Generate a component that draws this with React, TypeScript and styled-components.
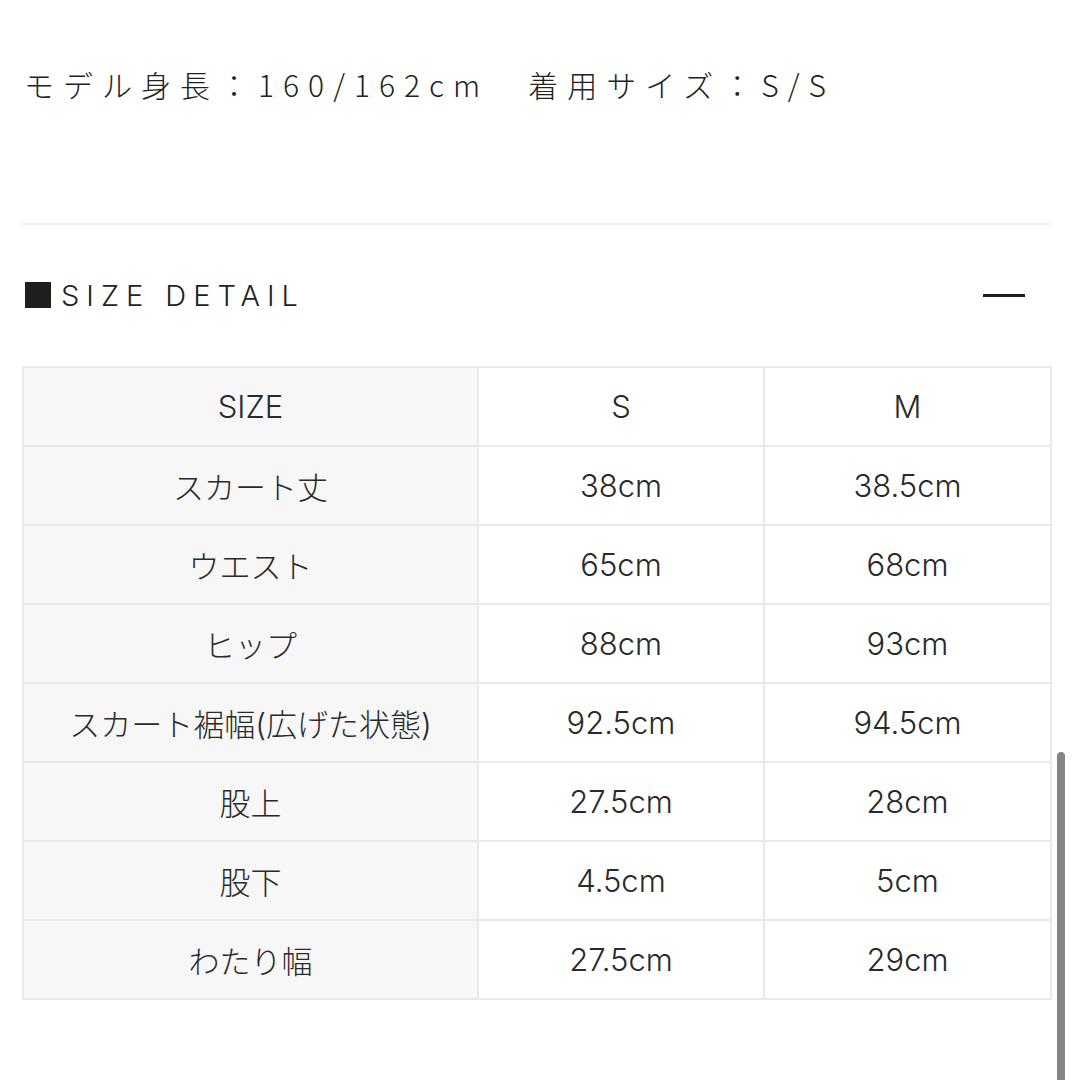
import React from 'react';
import styled, {createGlobalStyle} from "styled-components";

const GlobalStyle = createGlobalStyle`
  html, body {
    margin: 0;
    padding: 0;
    background: #fff;
  }
  body {
    font-family: "Inter", "Noto Sans CJK JP", sans-serif;
    color: #222;
  }
`

interface SizeRow {
    label: string;
    s: string;
    m: string;
}

const rows: Array<SizeRow> = [
    {label: 'スカート丈', s: '38cm', m: '38.5cm'},
    {label: 'ウエスト', s: '65cm', m: '68cm'},
    {label: 'ヒップ', s: '88cm', m: '93cm'},
    {label: 'スカート裾幅(広げた状態)', s: '92.5cm', m: '94.5cm'},
    {label: '股上', s: '27.5cm', m: '28cm'},
    {label: '股下', s: '4.5cm', m: '5cm'},
    {label: 'わたり幅', s: '27.5cm', m: '29cm'},
];

export default function App() {
    return (
        <>
            <GlobalStyle/>
            <Page>
                <ModelInfo>モデル身長：160/162cm　着用サイズ：S/S</ModelInfo>
                <Divider/>
                <SectionHeader>
                    <SectionTitle>
                        <Square/>
                        SIZE DETAIL
                    </SectionTitle>
                    <Minus/>
                </SectionHeader>
                <SizeTable>
                    <colgroup>
                        <col style={{width: '455px'}}/>
                        <col style={{width: '286px'}}/>
                        <col style={{width: '287px'}}/>
                    </colgroup>
                    <tbody>
                    <tr>
                        <Cell head>SIZE</Cell>
                        <Cell>S</Cell>
                        <Cell>M</Cell>
                    </tr>
                    {rows.map((row) => (
                        <tr key={row.label}>
                            <Cell head>{row.label}</Cell>
                            <Cell>{row.s}</Cell>
                            <Cell>{row.m}</Cell>
                        </tr>
                    ))}
                    </tbody>
                </SizeTable>
            </Page>
            <ScrollThumb/>
        </>
    );
}

const Page = styled.div`
  padding: 64px 24px 80px 22px;
`

const ModelInfo = styled.p`
  margin: 0 0 0 2px;
  font-family: "Noto Sans CJK JP", sans-serif;
  font-size: 30px;
  line-height: 40px;
  letter-spacing: 9px;
  color: #222;
  font-weight: 300;
`

const Divider = styled.hr`
  margin: 119px 0 0;
  border: none;
  height: 2px;
  background: #efefef;
`

const SectionHeader = styled.div`
  display: flex;
  align-items: center;
  justify-content: space-between;
  height: 40px;
  margin-top: 50px;
`

const SectionTitle = styled.h2`
  display: flex;
  align-items: center;
  margin: 0 0 0 3px;
  font-family: "Inter", "Noto Sans", sans-serif;
  font-weight: 300;
  font-size: 29px;
  letter-spacing: 7px;
  color: #222;
`

const Square = styled.span`
  display: inline-block;
  width: 26px;
  height: 26px;
  background: #1e1e1e;
  margin-right: 10px;
`

const Minus = styled.span`
  display: block;
  width: 42px;
  height: 3px;
  background: #1e1e1e;
  margin-right: 25px;
`

const SizeTable = styled.table`
  margin-top: 51px;
  width: 1028px;
  border-collapse: collapse;
  table-layout: fixed;
  border: 2px solid #e9e9e9;
`

const Cell = styled.td<{ head?: boolean }>`
  height: 77px;
  padding: 0;
  text-align: center;
  border: 2px solid #e9e9e9;
  background: ${props => props.head ? '#f7f7f7' : '#fff'};
  font-family: "Inter", "Noto Sans CJK JP", sans-serif;
  font-size: 31px;
  font-weight: 300;
  color: #2a2a2a;
`

const ScrollThumb = styled.div`
  position: fixed;
  left: 1057px;
  top: 752px;
  width: 8px;
  height: 340px;
  border-radius: 4px;
  background: #868686;
`
